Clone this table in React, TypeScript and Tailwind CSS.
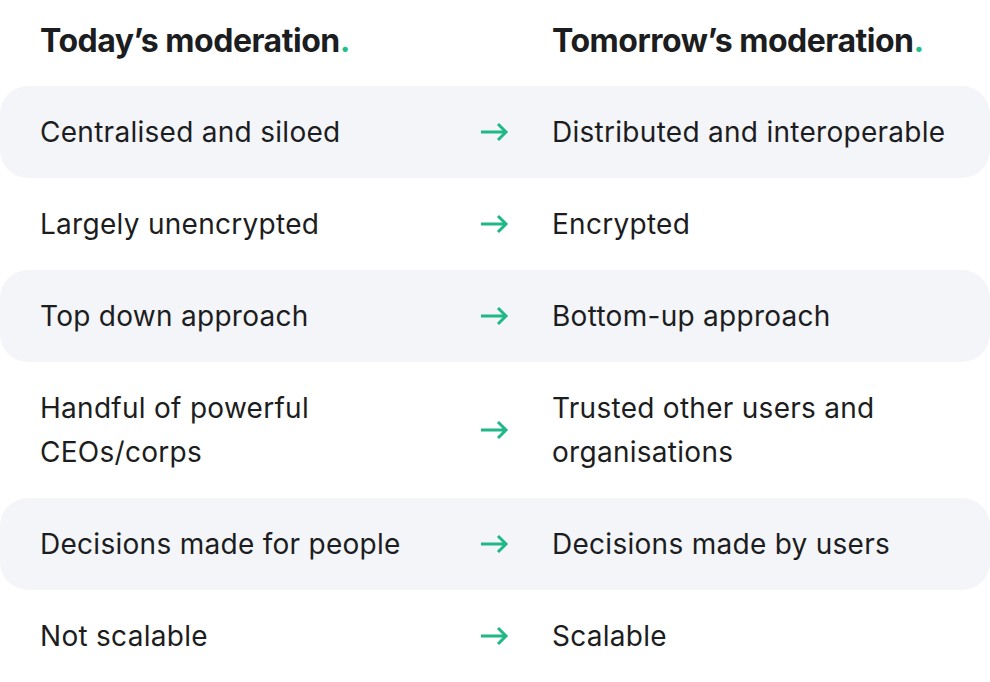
import React from "react";

const rows: [string, string][] = [
  ["Centralised and siloed", "Distributed and interoperable"],
  ["Largely unencrypted", "Encrypted"],
  ["Top down approach", "Bottom-up approach"],
  ["Handful of powerful CEOs/corps", "Trusted other users and organisations"],
  ["Decisions made for people", "Decisions made by users"],
  ["Not scalable", "Scalable"],
];

function Arrow() {
  return (
    <svg width="30" height="20" viewBox="0 0 30 20" fill="none" className="text-[#1fb886]">
      <path d="M1 10h25M18 2l8 8-8 8" stroke="currentColor" strokeWidth="3" />
    </svg>
  );
}

export default function App() {
  return (
    <div className="w-[990px] h-[682px] bg-white text-[#1c1d21] overflow-hidden" style={{ fontFamily: "Inter, 'Liberation Sans', sans-serif" }}>
      {/* headings */}
      <div className="grid grid-cols-[512px_1fr] h-[86px] items-center pl-10">
        <h2 className="text-[32px] font-bold tracking-[-0.015em] pb-1">
          Today’s moderation<span className="text-[#1fc08a]">.</span>
        </h2>
        <h2 className="text-[32px] font-bold tracking-[-0.015em] pb-1">
          Tomorrow’s moderation<span className="text-[#1fc08a]">.</span>
        </h2>
      </div>

      {/* comparison rows */}
      <div className="flex flex-col">
        {rows.map(([today, tomorrow], i) => (
          <div
            key={today}
            className={`grid grid-cols-[440px_72px_1fr] items-center pl-10 pr-6 py-6 rounded-[28px] text-[28px] leading-[44px] tracking-[0.01em] ${
              i % 2 === 0 ? "bg-[#f4f5f9]" : ""
            }`}
          >
            <span className="pr-6">{today}</span>
            <Arrow />
            <span>{tomorrow}</span>
          </div>
        ))}
      </div>
    </div>
  );
}
